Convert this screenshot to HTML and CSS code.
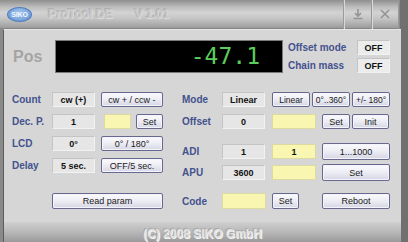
FILE: index.html
```html
<!DOCTYPE html>
<html>
<head>
<meta charset="utf-8">
<link rel="stylesheet" href="styles.css">
</head>
<body>
<div class="window">
  <div class="titlebar">
    <div class="logo"><span>SIKO</span></div>
    <div class="title">ProTool DE</div>
    <div class="title version">V 1.01</div>
    <div class="tb-spacer"></div>
    <div class="tb-btn">
      <svg width="12" height="12" viewBox="0 0 12 12"><path d="M6 1 V8 M3 5 L6 8 L9 5 M1.5 10.5 H10.5" fill="none" stroke="#939393" stroke-width="1.6"/></svg>
    </div>
    <div class="tb-btn">
      <svg width="12" height="12" viewBox="0 0 12 12"><path d="M2 2 L10 10 M10 2 L2 10" fill="none" stroke="#939393" stroke-width="1.6"/></svg>
    </div>
  </div>
  <div class="panel">
    <div class="top">
      <div class="pos-label">Pos</div>
      <div class="display">-47.1</div>
      <div class="status">
        <div class="status-row"><span class="label slabel">Offset mode</span><span class="box off">OFF</span></div>
        <div class="status-row"><span class="label slabel">Chain mass</span><span class="box off">OFF</span></div>
      </div>
    </div>
    <div class="lower">
      <div class="col left">
        <div class="row"><span class="label">Count</span><span class="box val">cw (+)</span><span class="btn wide">cw + / ccw -</span></div>
        <div class="row"><span class="label">Dec. P.</span><span class="box val">1</span><span class="yellow ys"></span><span class="btn set">Set</span></div>
        <div class="row"><span class="label">LCD</span><span class="box val">0°</span><span class="btn wide">0° / 180°</span></div>
        <div class="row"><span class="label">Delay</span><span class="box val">5 sec.</span><span class="btn wide">OFF/5 sec.</span></div>
        <div class="row last"><span class="label"></span><span class="btn read">Read param</span></div>
      </div>
      <div class="col right">
        <div class="row r1"><span class="label">Mode</span><span class="box val">Linear</span><span class="btn third">Linear</span><span class="btn third">0°..360°</span><span class="btn third">+/- 180°</span></div>
        <div class="row r2"><span class="label">Offset</span><span class="box val">0</span><span class="yellow yl"></span><span class="btn set2">Set</span><span class="btn init">Init</span></div>
        <div class="row r3"><span class="label">ADI</span><span class="box val">1</span><span class="yellow yl">1</span><span class="btn big">1...1000</span></div>
        <div class="row r4"><span class="label">APU</span><span class="box val">3600</span><span class="yellow yl"></span><span class="btn big">Set</span></div>
        <div class="row r5"><span class="label">Code</span><span class="yellow yc"></span><span class="btn set3">Set</span><span class="btn reboot">Reboot</span></div>
      </div>
    </div>
  </div>
  <div class="footer">(C) 2008 SIKO GmbH</div>
</div>
</body>
</html>
```

FILE: styles.css
```css
* { box-sizing: border-box; }
html, body { margin: 0; padding: 0; }
body {
  width: 408px; height: 242px; overflow: hidden;
  background: #6e6e6e;
  font-family: "Liberation Sans", Arial, sans-serif;
}
.window {
  width: 408px; height: 242px;
  display: flex; flex-direction: column;
  background: linear-gradient(90deg, #8a8a8a 0, #8a8a8a 400px, #707070 400px);
}
.titlebar {
  height: 29px; flex: none;
  display: flex; align-items: center;
  width: 399px;
  padding-left: 7px;
  background: linear-gradient(#8e8e8e 0%, #bdbdbd 25%, #d3d3d3 45%, #c6c6c6 65%, #a9a9a9 90%, #9a9a9a 100%);
  border-bottom: 1px solid #858585;
}
.logo {
  width: 25px; height: 15px;
  border-radius: 50%;
  background: radial-gradient(ellipse at 50% 40%, #a9c8ee 0%, #7aa6dc 60%, #5b88c6 100%);
  border: 1px solid #4f7dbd;
  display: flex; align-items: center; justify-content: center;
  margin-right: 16px;
}
.logo span { font-size: 7px; font-weight: bold; color: #f0f6ff; letter-spacing: -0.2px; }
.title {
  font-size: 12px; font-weight: bold;
  color: #c6c6c6;
  text-shadow: 1px 1px 0 #dadada, -1px -1px 0 #afafaf;
}
.version { margin-left: 22px; }
.tb-spacer { flex: 1; }
.tb-btn {
  width: 28px; height: 29px;
  display: flex; align-items: center; justify-content: center;
  border-left: 1px solid #9a9a9a;
  box-shadow: inset 1px 0 0 #d8d8d8;
}
.tb-btn:last-child { border-right: 1px solid #9a9a9a; }

.panel {
  flex: 1;
  margin: 0 7px 0 3px;
  background: #d6d6d6;
  border-left: 1px solid #5c5c5c;
  border-top: 1px solid #e6e6e6;
  padding: 10px 0 0 8px;
  display: flex; flex-direction: column;
}
.top { display: flex; align-items: flex-start; height: 33px; }
.pos-label {
  width: 43px; padding-left: 1px;
  font-size: 16px; font-weight: bold; color: #a4a4a4;
  line-height: 33px;
}
.display {
  width: 228px; height: 33px;
  background: #000;
  border: 1px solid #7a7a7a;
  color: #5ccc5c;
  font-family: "DejaVu Sans Mono", "Liberation Mono", monospace;
  font-size: 23px;
  line-height: 31px;
  text-align: right;
  padding-right: 22px;
}
.status { margin-left: 5px; display: flex; flex-direction: column; gap: 3px; }
.status-row { display: flex; align-items: center; height: 15px; }
.label {
  font-size: 10px; font-weight: bold; color: #44528e;
  width: 40px; flex: none;
}
.slabel { width: 69px; }
.box {
  height: 15px;
  background: #e6e6e6;
  border: 1px solid #c4c4c4;
  border-right-color: #f2f2f2; border-bottom-color: #f2f2f2;
  font-size: 9px; font-weight: bold; color: #111;
  display: flex; align-items: center; justify-content: center;
}
.off { width: 33px; background: #ececec; }
.val { width: 43px; flex: none; }

.lower { display: flex; margin-top: 19px; }
.col { display: flex; flex-direction: column; }
.left { width: 160px; }
.right { margin-left: 10px; }
.row { display: flex; align-items: center; height: 15px; margin-bottom: 7px; }
.left .row.last { margin-top: 13px; height: 16px; }
.btn {
  height: 15px;
  background: linear-gradient(#fbfbfe 0%, #ececf4 50%, #d6d6e4 100%);
  border: 1px solid #68688e;
  border-radius: 2px;
  font-size: 9px; color: #1a1a1a;
  display: flex; align-items: center; justify-content: center;
  flex: none;
  box-shadow: inset 0 0 0 1px #f4f4ff;
}
.wide { width: 62px; margin-left: 6px; }
.yellow {
  height: 15px;
  background: #f8f6b0;
  border: 1px solid #dcdaa0;
  font-size: 9px; font-weight: bold; color: #111;
  display: flex; align-items: center; justify-content: center;
  flex: none;
}
.ys { width: 27px; margin-left: 9px; }
.set { width: 27px; margin-left: 5px; }
.read { width: 111px; height: 16px; font-size: 9px; }
.right .row { margin-bottom: 0; }
.r1 { margin-top: 0; }
.r2 { margin-top: 7px; }
.r3 { margin-top: 14px; height: 17px; }
.r4 { margin-top: 4px; height: 17px; }
.r5 { margin-top: 12px; height: 16px; }
.third { width: 38px; margin-right: 2px; font-size: 8.5px; }
.r1 .btn:nth-child(3) { margin-left: 7px; }
.yl { width: 44px; margin-left: 7px; }
.set2 { width: 28px; margin-left: 6px; }
.init { width: 37px; margin-left: 2px; }
.big { width: 68px; height: 17px; margin-left: 6px; }
.yc { width: 44px; height: 16px; }
.set3 { width: 27px; height: 16px; margin-left: 6px; }
.reboot { width: 68px; height: 16px; margin-left: 23px; }

.footer {
  height: 20px; flex: none;
  margin: 0 7px 0 3px;
  background: linear-gradient(#cfcfcf 0%, #b8b8b8 50%, #9a9a9a 100%);
  border-left: 1px solid #5c5c5c;
  text-align: center;
  font-size: 12px; font-weight: bold;
  color: #e4e4e4;
  line-height: 20px;
  padding-top: 2px;
  text-shadow: -1px -1px 0 #a8a8a8, 1px 1px 0 #f4f4f4;
}
```
